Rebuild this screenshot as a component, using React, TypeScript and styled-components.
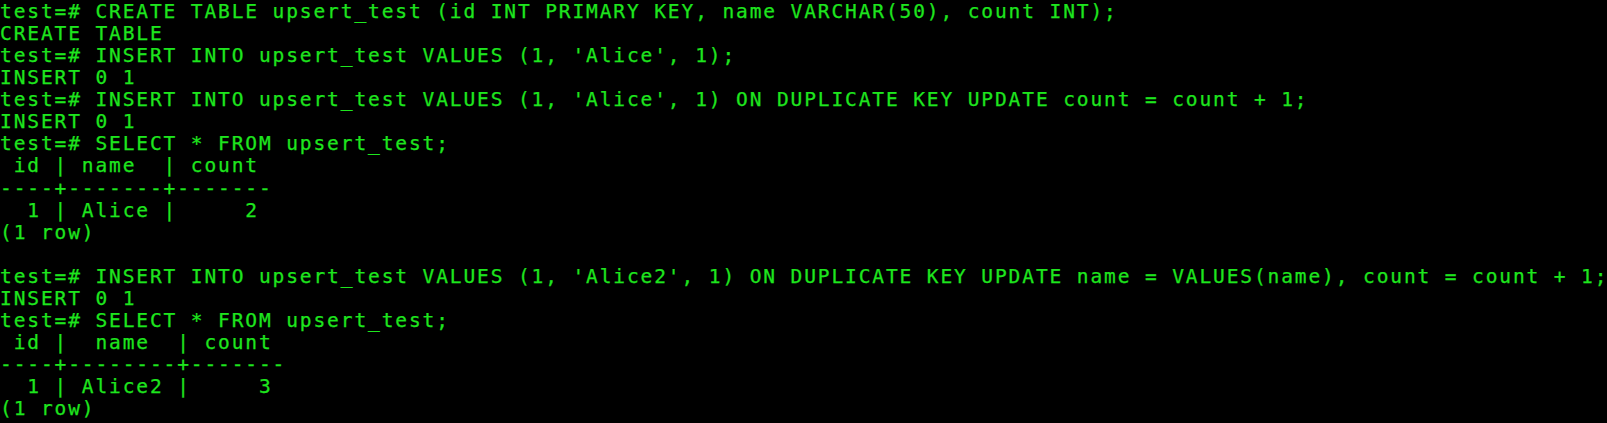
import React from "react";
import styled, { createGlobalStyle } from "styled-components";

const GlobalStyle = createGlobalStyle`
  html, body {
    margin: 0;
    padding: 0;
    background: #000;
    overflow: hidden;
  }
`;

const Terminal = styled.div`
  width: 1607px;
  height: 423px;
  box-sizing: border-box;
  padding-top: 1px;
  background: #000;
  color: #1ee51e;
  font-family: "DejaVu Sans Mono", "Liberation Mono", monospace;
  font-size: 19.5px;
  line-height: 22.07px;
  letter-spacing: 1.89px;
  -webkit-text-stroke: 0.25px #1ee51e;
  display: flex;
  flex-direction: column;
  overflow: hidden;
`;

const Line = styled.div`
  white-space: pre;
  height: 22.07px;
  flex: none;
`;

const lines = [
  "test=# CREATE TABLE upsert_test (id INT PRIMARY KEY, name VARCHAR(50), count INT);",
  "CREATE TABLE",
  "test=# INSERT INTO upsert_test VALUES (1, 'Alice', 1);",
  "INSERT 0 1",
  "test=# INSERT INTO upsert_test VALUES (1, 'Alice', 1) ON DUPLICATE KEY UPDATE count = count + 1;",
  "INSERT 0 1",
  "test=# SELECT * FROM upsert_test;",
  " id | name  | count",
  "----+-------+-------",
  "  1 | Alice |     2",
  "(1 row)",
  "",
  "test=# INSERT INTO upsert_test VALUES (1, 'Alice2', 1) ON DUPLICATE KEY UPDATE name = VALUES(name), count = count + 1;",
  "INSERT 0 1",
  "test=# SELECT * FROM upsert_test;",
  " id |  name  | count",
  "----+--------+-------",
  "  1 | Alice2 |     3",
  "(1 row)",
];

export default function App() {
  return (
    <>
      <GlobalStyle />
      <Terminal>
        {lines.map((l, i) => (
          <Line key={i}>{l}</Line>
        ))}
      </Terminal>
    </>
  );
}
